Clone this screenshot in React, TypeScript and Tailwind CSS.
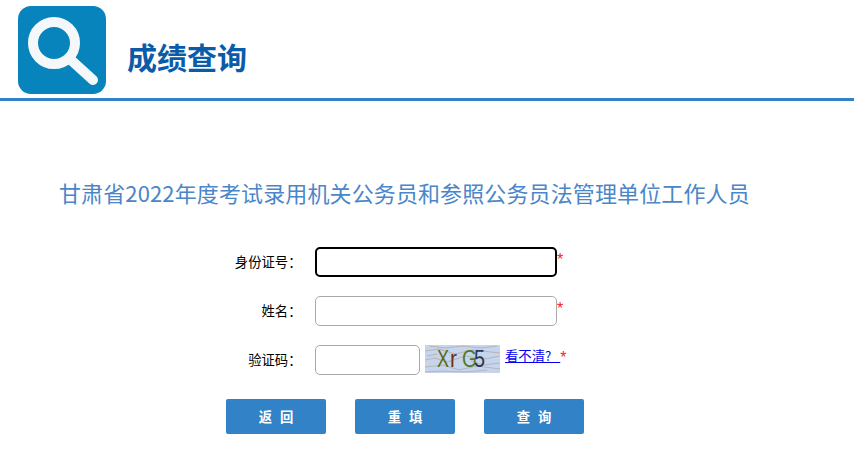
const cjk = "font-['Microsoft_YaHei','Noto_Sans_CJK_SC',sans-serif]";

function Logo() {
  return (
    <svg width="88" height="88" viewBox="0 0 88 88" className="shrink-0">
      <rect width="88" height="88" rx="13" fill="#0784bb" />
      <circle cx="36" cy="37" r="21" fill="none" stroke="#f4f8fa" strokeWidth="10" />
      <path d="M53 54 L75 74" stroke="#f4f8fa" strokeWidth="10" strokeLinecap="round" />
    </svg>
  );
}

function Captcha() {
  const noise = [
    "M0 6 L14 4 L30 9 L48 5 L75 8",
    "M0 15 L10 13 L22 17 L40 11 L60 14 L75 11",
    "M0 22 L18 20 L34 25 L52 21 L75 24",
    "M4 1 L20 3 L38 1 L56 3 L72 1",
    "M46 16 L58 20 L75 18",
    "M2 11 L12 9",
    "M0 27 L16 26 L40 27 L62 25",
  ];
  return (
    <svg width="75" height="28" viewBox="0 0 75 28" className="shrink-0 ml-[5px]">
      <rect width="75" height="28" fill="#c5d5ee" />
      {noise.map((d, i) => (
        <path key={i} d={d} fill="none" stroke="#b9b4b8" strokeWidth="1.2" />
      ))}
      <g fontFamily="Liberation Sans, sans-serif" fontSize="23">
        <text x="12" y="22" fill="#5b6a10" textLength="12" lengthAdjust="spacingAndGlyphs">X</text>
        <text x="25" y="22" fill="#6b3210" textLength="7" lengthAdjust="spacingAndGlyphs">r</text>
        <text x="37" y="22" fill="#4f7a22" textLength="15" lengthAdjust="spacingAndGlyphs">G</text>
        <text x="49" y="22" fill="#28365c" textLength="11" lengthAdjust="spacingAndGlyphs">5</text>
      </g>
    </svg>
  );
}

function Label({ children }: { children: React.ReactNode }) {
  return (
    <div className="w-[301.5px] shrink-0 pt-[5px] text-right text-[13.33px] leading-5 text-black">{children}</div>
  );
}

function Star() {
  return <span className="font-['Liberation_Sans',sans-serif] text-[16px] leading-[26px] text-[#ff2020]">*</span>;
}

function Btn({ children }: { children: React.ReactNode }) {
  return (
    <button className="h-[35px] w-[100px] rounded-[2px] bg-[#3182c6] pl-2 text-[13.33px] font-bold tracking-[8px] text-white">
      {children}
    </button>
  );
}

export default function App() {
  return (
    <div className={`min-h-[461px] bg-white ${cjk}`}>
      <header className="flex h-[101px] items-start border-b-[3px] border-[#3182c6] pl-[18px]">
        <div className="flex items-start pt-[6px]">
          <Logo />
          <h1 className="ml-[21px] mt-[30px] text-[30px] font-bold leading-10 text-[#0a5ca8]">成绩查询</h1>
        </div>
      </header>

      <h2 className="ml-[59px] mt-[75px] text-[22px] leading-8 tracking-[0.12px] text-[#4a86c8]">
        甘肃省2022年度考试录用机关公务员和参照公务员法管理单位工作人员
      </h2>

      <form className="mt-[39px]">
        <div className="flex">
          <Label>身份证号：</Label>
          <div className="ml-[13.5px] h-[30px] w-[242px] rounded-[5px] border-2 border-black" />
          <Star />
        </div>
        <div className="mt-[19px] flex">
          <Label>姓名：</Label>
          <input className="ml-[13.5px] h-[30px] w-[242px] rounded-[5px] border border-[#a9a9a9]" />
          <Star />
        </div>
        <div className="mt-[19px] flex">
          <Label>验证码：</Label>
          <input className="ml-[13.5px] h-[30px] w-[105px] rounded-[5px] border border-[#a9a9a9]" />
          <Captcha />
          <a href="#" className="ml-[5px] mt-px h-[19px] text-[13.33px] leading-5 text-[#0000ee] underline">看不清?&nbsp;&nbsp;&nbsp;</a>
          <span className="font-['Liberation_Sans',sans-serif] text-[16px] leading-[26px] text-[#ff2020]">*</span>
        </div>
        <div className="ml-[226px] mt-[24px] flex gap-[29px]">
          <Btn>返回</Btn>
          <Btn>重填</Btn>
          <Btn>查询</Btn>
        </div>
      </form>
    </div>
  );
}
